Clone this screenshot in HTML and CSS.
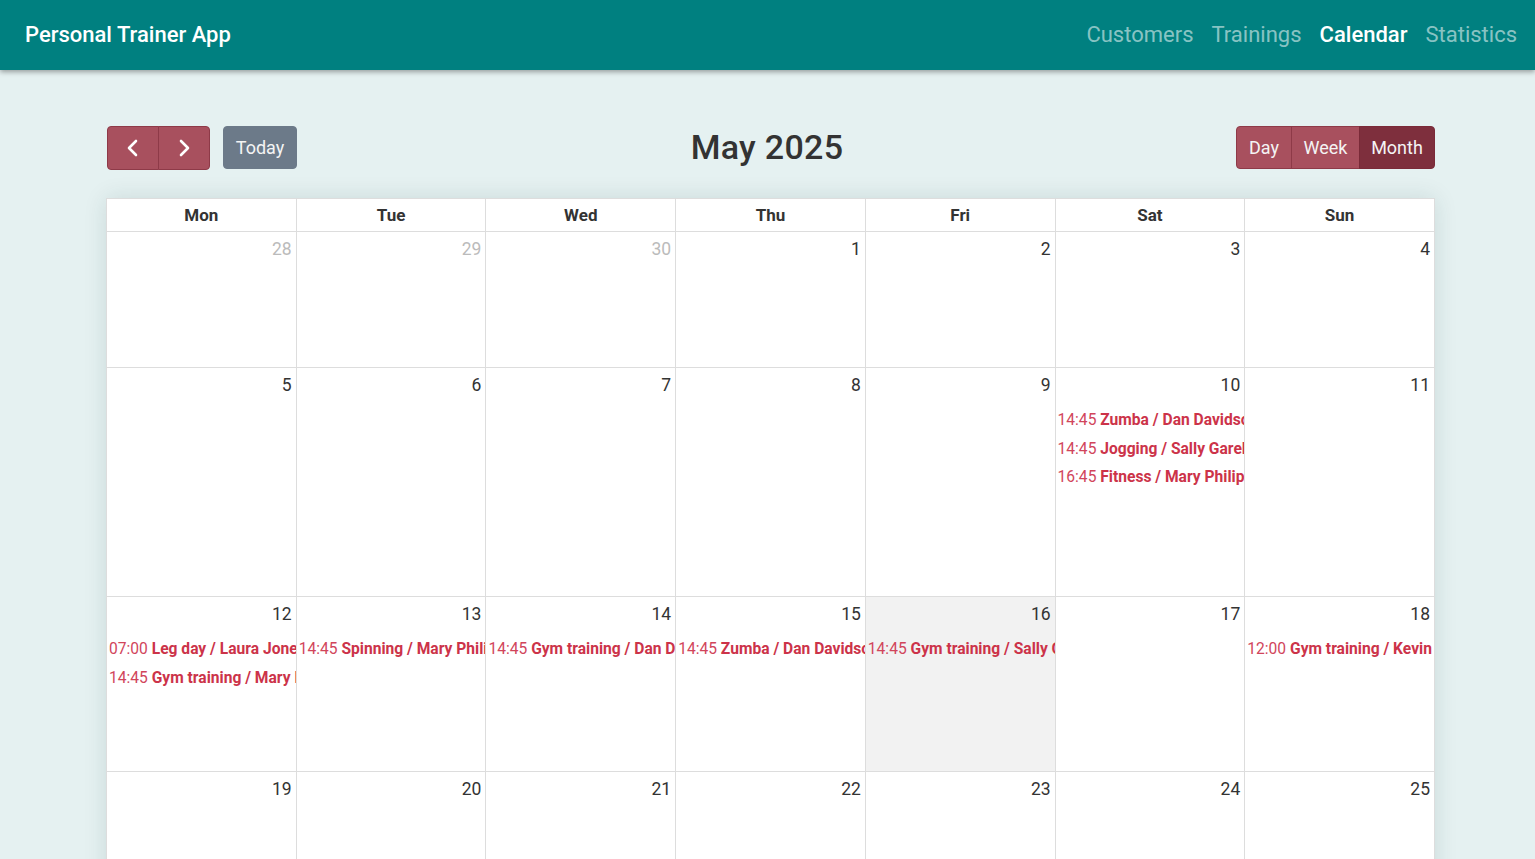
FILE: index.html
```html
<!DOCTYPE html>
<html lang="en">
<head>
<meta charset="utf-8">
<title>Personal Trainer App</title>
<link rel="stylesheet" href="styles.css">
</head>
<body>
<header class="navbar">
  <div class="brand">Personal Trainer App</div>
  <nav class="nav">
    <a class="nav-link">Customers</a>
    <a class="nav-link">Trainings</a>
    <a class="nav-link active">Calendar</a>
    <a class="nav-link">Statistics</a>
  </nav>
</header>

<main class="page">
  <div class="toolbar">
    <div class="toolbar-left">
      <div class="btn-group">
        <button class="btn btn-red btn-icon" aria-label="prev">
          <svg width="14" height="18" viewBox="0 0 14 18"><path d="M10 2 L3 9 L10 16" fill="none" stroke="#fff" stroke-width="2.6" stroke-linecap="round" stroke-linejoin="round"/></svg>
        </button>
        <button class="btn btn-red btn-icon" aria-label="next">
          <svg width="14" height="18" viewBox="0 0 14 18"><path d="M4 2 L11 9 L4 16" fill="none" stroke="#fff" stroke-width="2.6" stroke-linecap="round" stroke-linejoin="round"/></svg>
        </button>
      </div>
      <button class="btn btn-gray">Today</button>
    </div>
    <h2 class="title">May 2025</h2>
    <div class="toolbar-right">
      <div class="btn-group">
        <button class="btn btn-red btn-day">Day</button>
        <button class="btn btn-red btn-week">Week</button>
        <button class="btn btn-red active btn-month">Month</button>
      </div>
    </div>
  </div>

  <div class="calendar">
    <div class="head-row">
      <div class="head-cell">Mon</div>
      <div class="head-cell">Tue</div>
      <div class="head-cell">Wed</div>
      <div class="head-cell">Thu</div>
      <div class="head-cell">Fri</div>
      <div class="head-cell">Sat</div>
      <div class="head-cell">Sun</div>
    </div>

    <div class="week week-1">
      <div class="day other"><div class="num">28</div></div>
      <div class="day other"><div class="num">29</div></div>
      <div class="day other"><div class="num">30</div></div>
      <div class="day"><div class="num">1</div></div>
      <div class="day"><div class="num">2</div></div>
      <div class="day"><div class="num">3</div></div>
      <div class="day"><div class="num">4</div></div>
    </div>

    <div class="week week-2">
      <div class="day"><div class="num">5</div></div>
      <div class="day"><div class="num">6</div></div>
      <div class="day"><div class="num">7</div></div>
      <div class="day"><div class="num">8</div></div>
      <div class="day"><div class="num">9</div></div>
      <div class="day">
        <div class="num">10</div>
        <div class="events">
          <div class="event"><span class="time">14:45</span> <b class="etitle">Zumba / Dan Davidson</b></div>
          <div class="event"><span class="time">14:45</span> <b class="etitle">Jogging / Sally Garellick</b></div>
          <div class="event"><span class="time">16:45</span> <b class="etitle">Fitness / Mary Philips</b></div>
        </div>
      </div>
      <div class="day"><div class="num">11</div></div>
    </div>

    <div class="week week-3">
      <div class="day">
        <div class="num">12</div>
        <div class="events">
          <div class="event"><span class="time">07:00</span> <b class="etitle">Leg day / Laura Jones</b></div>
          <div class="event"><span class="time">14:45</span> <b class="etitle">Gym training / Mary Philips</b></div>
        </div>
      </div>
      <div class="day">
        <div class="num">13</div>
        <div class="events">
          <div class="event"><span class="time">14:45</span> <b class="etitle">Spinning / Mary Philips</b></div>
        </div>
      </div>
      <div class="day">
        <div class="num">14</div>
        <div class="events">
          <div class="event"><span class="time">14:45</span> <b class="etitle">Gym training / Dan Davidson</b></div>
        </div>
      </div>
      <div class="day">
        <div class="num">15</div>
        <div class="events">
          <div class="event"><span class="time">14:45</span> <b class="etitle">Zumba / Dan Davidson</b></div>
        </div>
      </div>
      <div class="day today">
        <div class="num">16</div>
        <div class="events">
          <div class="event"><span class="time">14:45</span> <b class="etitle">Gym training / Sally Garellick</b></div>
        </div>
      </div>
      <div class="day"><div class="num">17</div></div>
      <div class="day">
        <div class="num">18</div>
        <div class="events">
          <div class="event"><span class="time">12:00</span> <b class="etitle">Gym training / Kevin Smith</b></div>
        </div>
      </div>
    </div>

    <div class="week week-4">
      <div class="day"><div class="num">19</div></div>
      <div class="day"><div class="num">20</div></div>
      <div class="day"><div class="num">21</div></div>
      <div class="day"><div class="num">22</div></div>
      <div class="day"><div class="num">23</div></div>
      <div class="day"><div class="num">24</div></div>
      <div class="day"><div class="num">25</div></div>
    </div>
  </div>
</main>
</body>
</html>
```

FILE: styles.css
```css
* { box-sizing: border-box; }

html, body {
  margin: 0;
  padding: 0;
}

body {
  font-family: Roboto, "Liberation Sans", Arial, sans-serif;
  background: #e5f1f1;
  color: #333;
  height: 859px;
  overflow: hidden;
}

.navbar {
  height: 70px;
  background: #008080;
  display: flex;
  align-items: center;
  justify-content: space-between;
  padding: 0 18px 0 25px;
  box-shadow: 0 2px 5px rgba(0, 0, 0, 0.35);
  position: relative;
  z-index: 2;
}

.brand {
  color: #fff;
  font-size: 22px;
  font-weight: 500;
  padding-bottom: 1px;
}

.nav {
  display: flex;
  gap: 18px;
  padding-bottom: 1px;
}

.nav-link {
  color: rgba(255, 255, 255, 0.55);
  font-size: 22px;
  text-decoration: none;
}

.nav-link.active {
  color: #fff;
  font-weight: 500;
}

.page {
  padding: 56px 100px 0 107px;
}

.toolbar {
  display: flex;
  align-items: center;
  justify-content: space-between;
  height: 43px;
  margin-bottom: 29px;
}

.toolbar-left {
  display: flex;
  gap: 13px;
  align-items: center;
  width: 300px;
}

.toolbar-right {
  display: flex;
  justify-content: flex-end;
  width: 300px;
}

.title {
  margin: 0 8px 0 0;
  font-size: 34px;
  font-weight: 500;
  letter-spacing: 0.3px;
  color: #333;
  padding-bottom: 2px;
}

.btn-group {
  display: flex;
}

.btn {
  font-family: inherit;
  font-size: 18px;
  height: 43px;
  border: 1px solid transparent;
  border-radius: 4px;
  color: #f4f4f4;
  cursor: pointer;
  padding: 0 12px;
  display: flex;
  align-items: center;
  justify-content: center;
}

.btn-red {
  background: #a8505e;
  border-color: #8e3a48;
}

.btn-red.active {
  background: #7e2f3d;
  border-color: #7a2a38;
}

.btn-group .btn {
  border-radius: 0;
}

.btn-group .btn:first-child {
  border-radius: 4px 0 0 4px;
}

.btn-group .btn:last-child {
  border-radius: 0 4px 4px 0;
}

.btn-group .btn + .btn {
  margin-left: -1px;
}

.btn-icon {
  width: 52px;
  height: 44px;
  padding: 0;
}

.btn-gray {
  background: #6c7a89;
  border-color: #6c7a89;
  width: 74px;
  height: 43px;
  padding: 0;
}

.btn-day { width: 56px; }
.btn-week { width: 69px; }
.btn-month { width: 76px; }

.calendar {
  background: #fff;
  margin-left: -1px;
  border-left: 1px solid #ddd;
  border-top: 1px solid #ddd;
  box-shadow: 0 0 22px rgba(0, 60, 60, 0.12);
}

.head-row,
.week {
  display: grid;
  grid-template-columns: repeat(7, 1fr);
}

.head-cell {
  height: 33px;
  border-right: 1px solid #ddd;
  border-bottom: 1px solid #ddd;
  text-align: center;
  font-weight: 700;
  font-size: 17px;
  line-height: 33px;
  color: #333;
}

.week-1 { height: 136px; }
.week-2 { height: 229px; }
.week-3 { height: 175px; }
.week-4 { height: 136px; }

.day {
  border-right: 1px solid #ddd;
  border-bottom: 1px solid #ddd;
  overflow: hidden;
  min-width: 0;
}

.day.today {
  background: #f2f2f2;
}

.num {
  text-align: right;
  font-size: 17.5px;
  line-height: 22px;
  padding: 6px 4px 0 0;
  color: #333;
}

.day.other .num {
  color: #bbb;
}

.events {
  margin-top: 10px;
}

.event {
  white-space: nowrap;
  overflow: hidden;
  font-size: 15.6px;
  line-height: 20px;
  padding: 4px 0 4px 2px;
  margin-bottom: 0.5px;
  color: #cc3349;
}

.time {
  font-weight: 400;
  color: #d1455b;
}

.etitle {
  font-weight: 700;
}
```
